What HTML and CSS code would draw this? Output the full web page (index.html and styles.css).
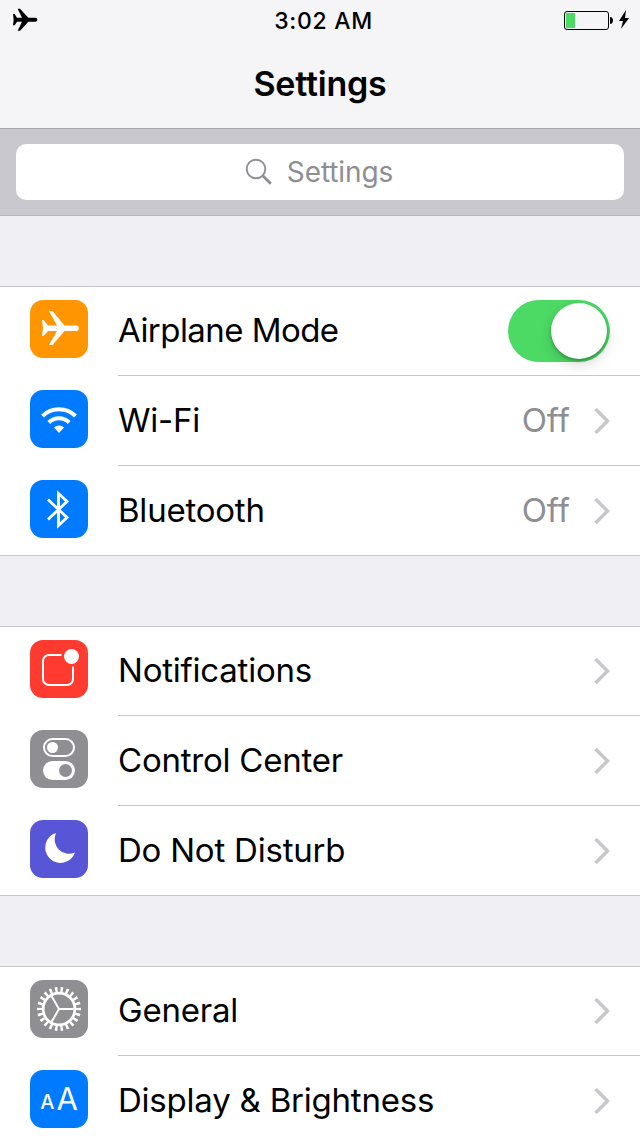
FILE: index.html
```html
<!DOCTYPE html>
<html lang="en">
<head>
  <meta charset="UTF-8">
  <title>Settings</title>
  <link rel="stylesheet" href="styles.css">
</head>
<body>
  <header class="header">
    <div class="status-bar">
      <svg class="status-plane" width="26" height="24" viewBox="0 0 38 36">
        <path d="M1 9h2.500l3.500 5.500h7.500L8 1H11.500l12.500 13.500h10.500a3 3 0 0 1 0 6H24L11.500 34H8L14.500 20.500H7L3.500 26H1l1-8.500z"/>
      </svg>
      <span class="time">3:02 AM</span>
      <div class="power">
        <svg width="50" height="20" viewBox="0 0 50 20">
          <rect x="0.500" y="1.500" width="44" height="18" rx="2.500" fill="none" stroke="#000"/>
          <rect x="2" y="3" width="9" height="15" fill="#4cd964"/>
          <path d="M46 7c4 0 4 7 0 7z"/>
        </svg>
        <svg width="12" height="20" viewBox="0 0 12 20">
          <path d="M8 0L1 11h4L3 19l8-11H7z"/>
        </svg>
      </div>
    </div>
    <h1>Settings</h1>
  </header>

  <div class="search-bar">
    <div class="search-field">
      <svg width="28" height="28" viewBox="0 0 28 28" fill="none" stroke="#8e8e93">
        <circle cx="11" cy="11" r="9.300" stroke-width="1.900"/>
        <path d="M17.800 17.800l8 8" stroke-width="2.800"/>
      </svg>
      <span>Settings</span>
    </div>
  </div>

  <div class="group">
    <div class="row">
      <div class="icon orange">
        <svg width="58" height="58" viewBox="0 0 58 58" fill="#fff">
          <path d="M12 20h1.500l4.500 5.500h9L19 11H22.500L34.500 25.500H46a2.800 2.800 0 0 1 0 5.600H34.500L22.500 45H19L27 31.100H18L13.500 36H12l1-8z"/>
        </svg>
      </div>
      <div class="cell">
        <span class="label">Airplane Mode</span>
        <div class="switch"><div class="knob"></div></div>
      </div>
    </div>
    <div class="row">
      <div class="icon blue">
        <svg width="58" height="58" viewBox="0 0 58 58" fill="none" stroke="#fff" stroke-width="4">
          <path d="M12.500 26a23.500 23.500 0 0 1 33 0"/>
          <path d="M18.800 32.500a14.500 14.500 0 0 1 20.400 0"/>
          <path d="M24 37.500a7.500 7.500 0 0 1 10 0L29 43z" fill="#fff" stroke="none"/>
        </svg>
      </div>
      <div class="cell">
        <span class="label">Wi-Fi</span>
        <span class="value">Off</span>
        <svg class="chevron" viewBox="0 0 16 28"><path d="M1.500 2l12 12-12 12"/></svg>
      </div>
    </div>
    <div class="row">
      <div class="icon blue">
        <svg width="58" height="58" viewBox="0 0 58 58" fill="none" stroke="#fff" stroke-width="2.800">
          <path d="M18 19.500L37 37.500 28.500 45.500V13.500L37 21.500 18 39.500"/>
        </svg>
      </div>
      <div class="cell">
        <span class="label">Bluetooth</span>
        <span class="value">Off</span>
        <svg class="chevron" viewBox="0 0 16 28"><path d="M1.500 2l12 12-12 12"/></svg>
      </div>
    </div>
  </div>

  <div class="group">
    <div class="row">
      <div class="icon red">
        <svg width="58" height="58" viewBox="0 0 58 58">
          <path d="M31.500 15H19a6 6 0 0 0-6 6v18a6 6 0 0 0 6 6h18a6 6 0 0 0 6-6V26.500" fill="none" stroke="#fff" stroke-width="2"/>
          <circle cx="41.500" cy="16.500" r="7.500" fill="#fff"/>
        </svg>
      </div>
      <div class="cell">
        <span class="label">Notifications</span>
        <svg class="chevron" viewBox="0 0 16 28"><path d="M1.500 2l12 12-12 12"/></svg>
      </div>
    </div>
    <div class="row">
      <div class="icon gray">
        <svg width="58" height="58" viewBox="0 0 58 58">
          <rect x="14" y="9" width="30" height="17" rx="8.500" fill="none" stroke="#fff" stroke-width="2"/>
          <circle cx="22.500" cy="17.500" r="5.500" fill="#fff"/>
          <rect x="13" y="31" width="32" height="19" rx="9.500" fill="#fff"/>
          <circle cx="35.500" cy="40.500" r="6.500" fill="#8e8e93"/>
        </svg>
      </div>
      <div class="cell">
        <span class="label">Control Center</span>
        <svg class="chevron" viewBox="0 0 16 28"><path d="M1.500 2l12 12-12 12"/></svg>
      </div>
    </div>
    <div class="row">
      <div class="icon purple">
        <svg width="58" height="58" viewBox="0 0 58 58">
          <path d="M26 13A15.300 15.300 0 1 0 45 32.500A14.500 14.500 0 0 1 26 13z" fill="#fff"/>
        </svg>
      </div>
      <div class="cell">
        <span class="label">Do Not Disturb</span>
        <svg class="chevron" viewBox="0 0 16 28"><path d="M1.500 2l12 12-12 12"/></svg>
      </div>
    </div>
  </div>

  <div class="group">
    <div class="row">
      <div class="icon gray">
        <svg width="58" height="58" viewBox="0 0 58 58" fill="none" stroke="#fff">
          <circle cx="29" cy="29" r="15.900" stroke-width="2.800"/>
          <circle cx="29" cy="29" r="19.400" stroke-width="5.200" pathLength="88" stroke-dasharray="1.800 2.200" stroke-dashoffset="0.900"/>
          <path d="M29 29h15M29 29l-7.500-13M29 29l-7.500 13" stroke-width="2"/>
        </svg>
      </div>
      <div class="cell">
        <span class="label">General</span>
        <svg class="chevron" viewBox="0 0 16 28"><path d="M1.500 2l12 12-12 12"/></svg>
      </div>
    </div>
    <div class="row">
      <div class="icon blue text-size">
        <span class="small-a">A</span><span class="big-a">A</span>
      </div>
      <div class="cell">
        <span class="label">Display &amp; Brightness</span>
        <svg class="chevron" viewBox="0 0 16 28"><path d="M1.500 2l12 12-12 12"/></svg>
      </div>
    </div>
  </div>
</body>
</html>
```

FILE: styles.css
```css
body {
  margin: 0;
  height: 1136px;
  overflow: hidden;
  background-color: #efeff4;
  font-family: Inter, "Liberation Sans", sans-serif;
  color: #000;
}

svg {
  display: block;
  flex: none;
}

.header {
  box-sizing: border-box;
  height: 129px;
  background-color: #f5f5f8;
  border-bottom: 1px solid #a7a7ac;
}

.status-bar {
  display: grid;
  grid-template-columns: 1fr auto 1fr;
  align-items: center;
  height: 40px;
  padding: 0 10px 0 12px;
}

.time {
  padding: 2px 0 0 5px;
  font-size: 23px;
  font-weight: 500;
  letter-spacing: 0.7px;
}

.power {
  display: flex;
  justify-content: flex-end;
  align-items: center;
  gap: 4px;
}

h1 {
  margin: 0;
  line-height: 88px;
  font-size: 34px;
  font-weight: 600;
  letter-spacing: -0.2px;
  text-align: center;
}

.search-bar {
  box-sizing: border-box;
  height: 87px;
  padding: 15px 16px;
  background-color: #c9c8ce;
  border-bottom: 1px solid #b7b6bb;
}

.search-field {
  box-sizing: border-box;
  display: flex;
  justify-content: center;
  align-items: center;
  gap: 14px;
  height: 56px;
  padding-right: 2px;
  background-color: #fff;
  border-radius: 10px;
  font-size: 28px;
  letter-spacing: -0.1px;
  color: #8e8e93;
}

.group {
  margin-top: 70px;
  background-color: #fff;
  box-shadow: inset 0 1px 0 #c8c7cc; /* top hairline */
}

.row {
  display: flex;
  height: 90px;
  padding-left: 30px;
}

.row:last-child {
  box-shadow: inset 0 -1px 0 #c8c7cc;
}

.icon {
  flex: none;
  width: 58px;
  height: 58px;
  margin: 14px 30px 0 0;
  border-radius: 13px;
}

.orange { background-color: #ff9500; }
.blue { background-color: #007aff; }
.red { background-color: #ff3b30; }
.gray { background-color: #8e8e93; }
.purple { background-color: #5856d6; }

.cell {
  flex: 1;
  display: flex;
  align-items: center;
  box-sizing: border-box;
  padding-right: 30px;
  border-bottom: 1px solid #c8c7cc;
}

.label {
  flex: 1;
  padding-bottom: 2px;
  font-size: 33px;
  letter-spacing: -0.22px;
}

.label:has(+ .switch) {
  letter-spacing: -0.55px;
}

.value {
  padding-bottom: 2px;
  font-size: 33px;
  color: #8e8e93;
  margin-right: 24px;
}

.chevron {
  width: 16px;
  height: 28px;
  fill: none;
  stroke: #c7c7cc;
  stroke-width: 3.5;
}

.switch {
  display: flex;
  justify-content: flex-end;
  box-sizing: border-box;
  width: 102px;
  height: 62px;
  padding: 3px;
  border-radius: 31px;
  background-color: #4cd964;
}

.knob {
  width: 56px;
  height: 56px;
  border-radius: 50%;
  background-color: #fff;
  box-shadow: 0 2px 3px rgba(0, 0, 0, 0.25), 0 6px 14px rgba(0, 0, 0, 0.15);
}

.text-size {
  line-height: 58px;
  text-align: center;
  color: #fff;
}

.small-a {
  margin-right: 2px;
  font-size: 20px;
  font-weight: 500;
  vertical-align: 1px;
}

.big-a {
  font-size: 31px;
}
```
